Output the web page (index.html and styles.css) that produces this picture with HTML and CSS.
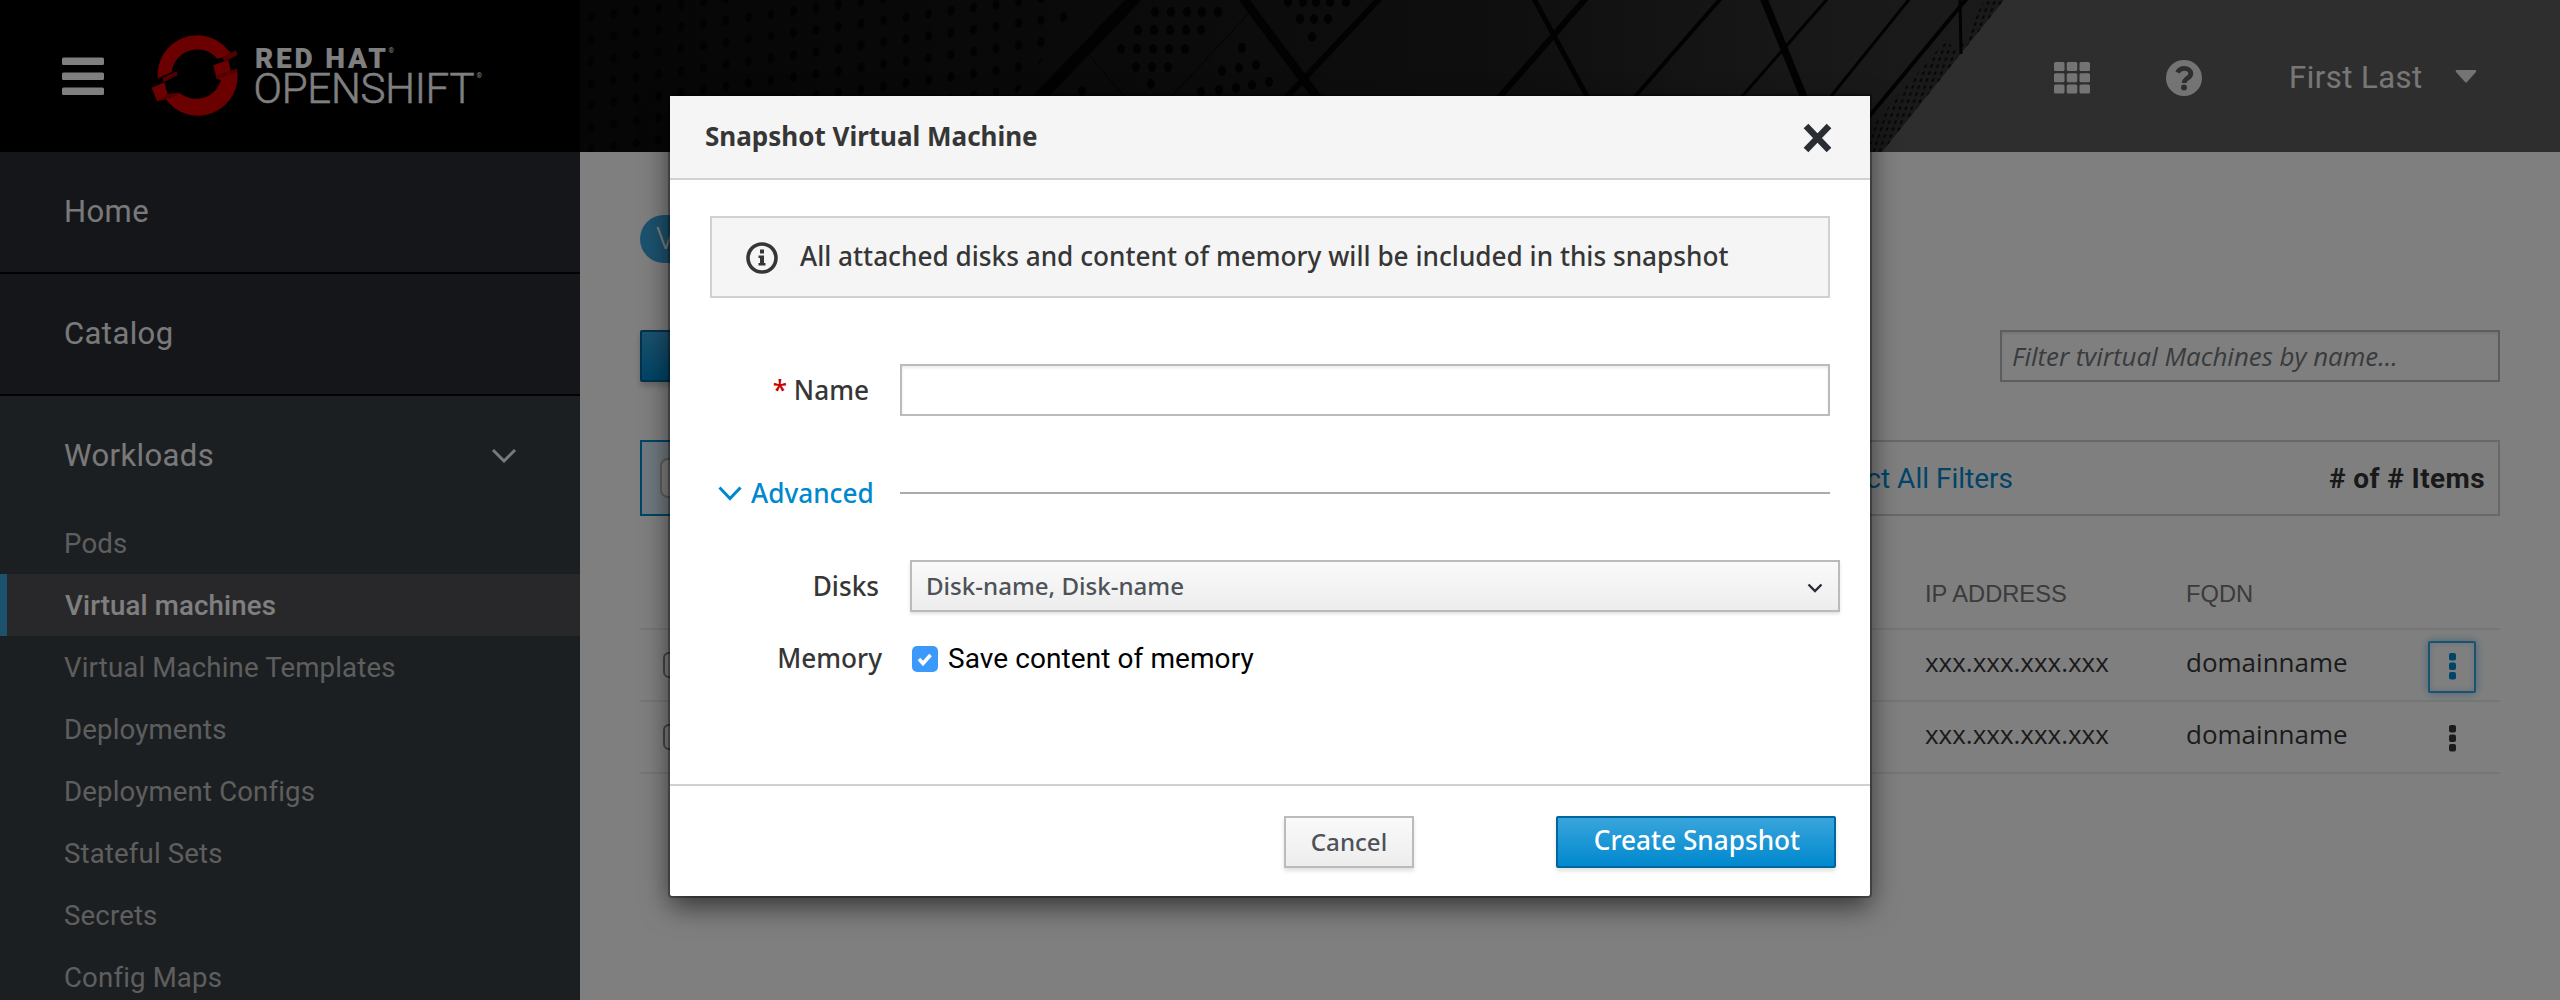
FILE: index.html
```html
<!DOCTYPE html>
<html lang="en">
<head>
<meta charset="utf-8">
<title>Virtual Machines</title>
<link rel="stylesheet" href="styles.css">
</head>
<body>
<div class="page">
  <header class="masthead">
    <div class="brand">
      <svg class="menu-icon" viewBox="0 0 42 38"><rect y="0.5" width="42" height="7.5" rx="1.5"/><rect y="15.5" width="42" height="7.5" rx="1.5"/><rect y="30.5" width="42" height="7.5" rx="1.5"/></svg>
      <svg class="logo" viewBox="0 0 345 100">
        <g class="logo-ring" transform="scale(.3333)">
          <path d="M38 160A119 119 0 0 1 248 74L258 84L232 98L217 101A78 78 0 0 0 80 141Z"/>
          <path d="M205 121L250 105L257 138L276 131A119 119 0 0 1 62 222L36 228L20 188L58 172L68 207L105 205A78 78 0 0 0 228 165L215 162Z"/>
          <path class="logo-fold" d="M52 158L96 139L97 151L56 172Z"/>
          <path class="logo-fold" d="M232 98L272 76L278 89L240 110Z"/>
          <path class="logo-fold" d="M216 150L276 131L275 141L216 163Z"/>
          <path class="logo-fold" d="M36 228L68 207L105 205L85 216L62 224Z"/>
        </g>
        <text class="logo-bold" x="110" y="42.6" textLength="131">RED HAT</text>
        <text class="logo-light" x="108.5" y="78" textLength="221">OPENSHIFT</text>
        <text class="logo-mark" x="243.5" y="27.5">®</text>
        <text class="logo-mark" x="331.5" y="53">®</text>
      </svg>
    </div>
    <svg class="facade" viewBox="580 0 1980 152" preserveAspectRatio="none">
      <defs>
        <linearGradient id="wall"><stop offset="0" stop-color="#0c0c0c"/><stop offset=".35" stop-color="#141414"/><stop offset=".65" stop-color="#1e1e1e"/><stop offset=".9" stop-color="#333"/><stop offset="1" stop-color="#343434"/></linearGradient>
        <pattern id="holes" width="22.5" height="22" patternUnits="userSpaceOnUse" patternTransform="translate(580 30) skewY(-8)"><ellipse cx="11" cy="11" rx="3.6" ry="5" fill="#050505"/></pattern>
        <pattern id="mesh" width="6" height="7" patternUnits="userSpaceOnUse" patternTransform="skewX(-18)"><ellipse cx="3" cy="3" rx="1.3" ry="2" fill="#0c0c0c"/></pattern>
      </defs>
      <rect x="580" width="1980" height="152" fill="#5d5d5d"/>
      <path d="M580 0H2004L1882 152H580Z" fill="url(#wall)"/>
      <path d="M580 0H1088L1000 115V152H580Z" fill="url(#holes)"/>
      <path d="M1984 0H2004L1882 152H1850L1946 40L1961 55V48Z" fill="url(#mesh)"/>
      <g fill="#050505">
        <ellipse cx="1155" cy="12" rx="4" ry="5"/><ellipse cx="1171" cy="12" rx="4" ry="5"/><ellipse cx="1187" cy="12" rx="4" ry="5"/><ellipse cx="1202" cy="12" rx="4" ry="5"/><ellipse cx="1218" cy="12" rx="4" ry="5"/>
        <ellipse cx="1138" cy="30" rx="4" ry="5"/><ellipse cx="1154" cy="30" rx="4" ry="5"/><ellipse cx="1170" cy="30" rx="4" ry="5"/><ellipse cx="1186" cy="30" rx="4" ry="5"/><ellipse cx="1201" cy="30" rx="4" ry="5"/>
        <ellipse cx="1121" cy="49" rx="4" ry="5"/><ellipse cx="1137" cy="49" rx="4" ry="5"/><ellipse cx="1153" cy="49" rx="4" ry="5"/><ellipse cx="1169" cy="49" rx="4" ry="5"/><ellipse cx="1185" cy="49" rx="4" ry="5"/>
        <ellipse cx="1136" cy="67" rx="4" ry="5"/><ellipse cx="1152" cy="67" rx="4" ry="5"/><ellipse cx="1168" cy="67" rx="4" ry="5"/><ellipse cx="1151" cy="84" rx="4" ry="5"/><ellipse cx="1082" cy="91" rx="4" ry="5"/>
        <ellipse cx="1242" cy="48" rx="4" ry="5"/><ellipse cx="1222" cy="71" rx="4" ry="5"/><ellipse cx="1239" cy="68" rx="4" ry="5"/><ellipse cx="1256" cy="65" rx="4" ry="5"/>
        <ellipse cx="1201" cy="92" rx="4" ry="5"/><ellipse cx="1219" cy="90" rx="4" ry="5"/><ellipse cx="1236" cy="88" rx="4" ry="5"/><ellipse cx="1252" cy="85" rx="4" ry="5"/><ellipse cx="1269" cy="82" rx="4" ry="5"/>
        <ellipse cx="1288" cy="2" rx="4" ry="5"/><ellipse cx="1303" cy="2" rx="4" ry="5"/><ellipse cx="1316" cy="2" rx="4" ry="5"/><ellipse cx="1330" cy="2" rx="4" ry="5"/><ellipse cx="1346" cy="2" rx="4" ry="5"/>
        <ellipse cx="1300" cy="19" rx="4" ry="5"/><ellipse cx="1314" cy="19" rx="4" ry="5"/><ellipse cx="1328" cy="19" rx="4" ry="5"/><ellipse cx="1312" cy="37" rx="4" ry="5"/>
      </g>
      <g class="beams">
        <path stroke-width="12" d="M1136 -3L1037 100"/>
        <path stroke-width="9" d="M1242 -3L1319 100"/>
        <path stroke-width="6" d="M1381 -3L1284 100"/>
        <path stroke-width="5" d="M1533 -3L1589 100"/>
        <path stroke-width="6" d="M1587 -3L1497 100"/>
        <path stroke-width="7.5" d="M1763 -3L1805 100"/>
        <path stroke-width="4" d="M1722 -3L1632 100"/>
        <path stroke-width="3" d="M1829 -3L1739 100"/>
        <path stroke-width="3" d="M1911 -3L1828 100"/>
        <path stroke-width="4" d="M1968 -3L1862 125"/>
        <path stroke-width="3" d="M1960 0L1961 54"/>
        <path stroke-width="1" d="M1249 13L1172 96"/>
        <path stroke-width="1" d="M1088 54L1124 96"/>
      </g>
    </svg>
    <div class="tools">
      <svg class="grid-icon" viewBox="0 0 36 32"><rect width="10.5" height="9" rx="1.5"/><rect x="12.75" width="10.5" height="9" rx="1.5"/><rect x="25.5" width="10.5" height="9" rx="1.5"/><rect y="11.3" width="10.5" height="9" rx="1.5"/><rect x="12.75" y="11.3" width="10.5" height="9" rx="1.5"/><rect x="25.5" y="11.3" width="10.5" height="9" rx="1.5"/><rect y="22.6" width="10.5" height="9" rx="1.5"/><rect x="12.75" y="22.6" width="10.5" height="9" rx="1.5"/><rect x="25.5" y="22.6" width="10.5" height="9" rx="1.5"/></svg>
      <svg class="help-icon" viewBox="0 0 36 36"><circle cx="18" cy="18" r="18"/><path d="M11.5 12.5C13 9.500 15 8.300 18 8.300C22 8.300 24.800 10.600 24.800 13.700C24.800 18.300 18.200 18 18.200 23"/><circle class="help-dot" cx="18" cy="27.5" r="3"/></svg>
      <span class="user">First Last</span>
      <svg class="caret" viewBox="0 0 22 13"><path d="M1.5 0H20.5Q22 .6 21 2L12 12Q11 13 10 12L1 2Q0 .6 1.5 0Z"/></svg>
    </div>
  </header>
  <div class="body">
    <nav class="sidebar">
      <div class="nav-item">Home</div>
      <div class="nav-item">Catalog</div>
      <div class="nav-head"><span>Workloads</span><svg class="nav-chevron" viewBox="0 0 26 15"><path d="M2 2L13 13L24 2"/></svg></div>
      <div class="nav-sub">Pods</div>
      <div class="nav-sub nav-active">Virtual machines</div>
      <div class="nav-sub">Virtual Machine Templates</div>
      <div class="nav-sub">Deployments</div>
      <div class="nav-sub">Deployment Configs</div>
      <div class="nav-sub">Stateful Sets</div>
      <div class="nav-sub">Secrets</div>
      <div class="nav-sub">Config Maps</div>
    </nav>
    <main class="content">
      <div class="title-row"><span class="kind">V</span></div>
      <div class="toolbar"><div class="create"></div><div class="filter">Filter tvirtual Machines by name...</div></div>
      <div class="facets">
        <div class="facet-on"><span class="facet-count"></span></div>
        <div class="facet-links"><span class="link">ct All Filters</span></div>
        <strong class="count"># of # Items</strong>
      </div>
      <div class="row row-head"><span></span><span>IP ADDRESS</span><span>FQDN</span><span></span></div>
      <div class="row"><span class="tick"></span><span>xxx.xxx.xxx.xxx</span><span>domainname</span><span class="kebab kebab-on"><svg viewBox="0 0 7 27"><rect width="7" height="7.5" rx="2"/><rect y="9.5" width="7" height="7.5" rx="2"/><rect y="19" width="7" height="7.5" rx="2"/></svg></span></div>
      <div class="row"><span class="tick"></span><span>xxx.xxx.xxx.xxx</span><span>domainname</span><span class="kebab"><svg viewBox="0 0 7 27"><rect width="7" height="7.5" rx="2"/><rect y="9.5" width="7" height="7.5" rx="2"/><rect y="19" width="7" height="7.5" rx="2"/></svg></span></div>
    </main>
  </div>
</div>
<div class="backdrop">
  <section class="modal">
    <div class="modal-head"><h1 class="modal-title">Snapshot Virtual Machine</h1><svg class="close" viewBox="0 0 30 30"><path d="M3 3L26 27M26 3L3 27"/></svg></div>
    <div class="modal-body">
      <div class="alert">
        <svg class="info" viewBox="0 0 32 32"><circle cx="16" cy="16" r="14"/><path d="M14 7.500H18V11.500H14ZM12.500 13.500H18V21H19.500V23.500H12.500V21H14V16H12.500Z"/></svg>
        <span>All attached disks and content of memory will be included in this snapshot</span>
      </div>
      <div class="field name-field"><label><span class="required">*</span> Name</label><div class="input"></div></div>
      <div class="field advanced"><div class="toggle"><svg class="toggle-chevron" viewBox="0 0 24 15"><path d="M1.500 1.500L12 12.500L22.500 1.500"/></svg><span>Advanced</span></div><div class="rule"></div></div>
      <div class="field disks-field"><label>Disks</label><div class="select"><span>Disk-name, Disk-name</span><svg class="select-chevron" viewBox="0 0 16 10"><path d="M1.500 1.500L8 8L14.500 1.500"/></svg></div></div>
      <div class="field memory-field"><label>Memory</label><div class="check"><svg class="checkbox" viewBox="0 0 26 26"><rect width="26" height="26" rx="5"/><path d="M7 13L11 17.500L18.500 9"/></svg><span>Save content of memory</span></div></div>
    </div>
    <div class="modal-foot"><div class="btn cancel">Cancel</div><div class="btn primary">Create Snapshot</div></div>
  </section>
</div>
</body>
</html>
```
FILE: styles.css
```css
* { box-sizing: border-box; }
body { margin: 0; width: 2560px; height: 1000px; overflow: hidden; background: #fff; font: 400 26px "Open Sans", "Noto Sans", sans-serif; position: relative; }
svg { display: block; flex: none; }
.page { height: 1000px; display: flex; flex-direction: column; overflow: hidden; }

.masthead { height: 152px; flex: none; display: flex; position: relative; background: #000; }
.brand { width: 580px; display: flex; padding: 25px 0 0 62px; }
.menu-icon { width: 42px; height: 38px; margin-top: 32px; fill: #fff; }
.logo { width: 345px; height: 100px; margin-left: 41px; font-family: Roboto, sans-serif; fill: #fff; overflow: visible; }
.logo-ring { fill: #d40000; }
.logo-fold { fill: #a80000; }
.logo-bold { font-weight: 900; font-size: 28px; }
.logo-light { font-weight: 300; font-size: 42px; stroke: #fff; stroke-width: .5px; }
.logo-mark { font-size: 7px; }
.facade { width: 1980px; height: 152px; }
.beams { stroke: #050505; fill: none; }
.tools { position: absolute; right: 83px; top: 0; height: 152px; display: flex; align-items: center; fill: #e8e8e8; }
.grid-icon { width: 36px; height: 32px; margin: 4px 76px 0 0; }
.help-icon { width: 36px; height: 36px; margin: 4px 87px 0 0; }
.help-icon path { fill: none; stroke: #5d5d5d; stroke-width: 4.8; }
.help-dot { fill: #5d5d5d; }
.user { width: 134px; font: 31px Roboto, sans-serif; letter-spacing: .5px; color: #eee; white-space: nowrap; padding-top: 3px; }
.caret { width: 22px; height: 13px; margin-left: 32px; }

.body { flex: 1; display: flex; min-height: 0; }
.sidebar { width: 580px; background: #383e43; color: #fff; font-family: Roboto, sans-serif; overflow: hidden; }
.nav-item, .nav-head { font-size: 31px; letter-spacing: .4px; padding-left: 64px; display: flex; align-items: center; color: #f2f2f2; }
.nav-item { height: 122px; background: #2b2d33; border-bottom: 2px solid #050505; padding-bottom: 2px; }
.nav-head { height: 116px; padding: 2px 63px 0 64px; justify-content: space-between; }
.nav-chevron { width: 26px; height: 15px; fill: none; stroke: #f2f2f2; stroke-width: 3; }
.nav-sub { height: 62px; padding-left: 64px; font-size: 27.6px; letter-spacing: .15px; line-height: 63px; color: #bcbcbc; }
.nav-active { padding-left: 58px; border-left: 7px solid #39a5dc; background: #505157; color: #fff; font-weight: 500; }

.content { flex: 1; padding: 63px 60px 0; display: flex; flex-direction: column; }
.title-row { height: 115px; }
.kind { display: block; width: 80px; height: 48px; padding-left: 16px; border-radius: 24px; background: #39a5dc; color: #fff; font: 300 31px/47px Roboto, sans-serif; }
.toolbar { height: 110px; display: flex; justify-content: space-between; align-items: flex-start; }
.create { width: 200px; height: 52px; border: 2px solid #00659c; border-radius: 2px; background: linear-gradient(#39a5dc, #0088ce); box-shadow: 0 4px 6px rgba(3, 3, 3, .2); }
.filter { width: 500px; height: 52px; border: 2px solid #bbb; padding-left: 10px; line-height: 48px; font-style: italic; font-size: 25.9px; color: #72767b; box-shadow: inset 0 2px 2px rgba(3, 3, 3, .08); white-space: nowrap; }
.facets { height: 76px; border: 2px solid #d1d1d1; display: flex; align-items: center; padding-right: 13px; font: 28px Roboto, sans-serif; }
.facet-on { width: 200px; height: 76px; margin: -2px 0 -2px -2px; border: 2px solid #0088ce; background: #def3ff; padding: 16px 18px; }
.facet-count { display: block; width: 46px; height: 40px; border: 2px solid #bbb; border-radius: 8px; background: #fff; }
.facet-links { flex: 1; }
.link { display: block; width: 1173px; text-align: right; color: #0088ce; }
.count { color: #333; font-weight: 700; font-size: 28px; letter-spacing: .4px; }
.row { height: 72px; display: grid; grid-template-columns: 1285px 261px 242px 48px; border-bottom: 2px solid #ececec; color: #363636; line-height: 64px; }
.row-head { height: 114px; font: 23.7px/40px "Liberation Sans", sans-serif; color: #72767b; padding-top: 58px; }
.tick { width: 26px; height: 26px; margin: 22px 0 0 23px; border: 2px solid #8a8a8a; border-radius: 6px; }
.kebab { width: 48px; height: 52px; margin-top: 11px; padding: 0 0 2px 1px; border: 2px solid transparent; border-radius: 2px; display: flex; justify-content: center; align-items: center; fill: #363636; }
.kebab svg { width: 7px; height: 27px; }
.kebab-on { border-color: #39a5dc; fill: #0088ce; box-shadow: 0 0 10px rgba(57, 165, 220, .6), inset 0 0 6px rgba(57, 165, 220, .3); }

.backdrop { position: absolute; inset: 0; background: rgba(0, 0, 0, .5); padding: 96px 0 0 670px; }
.modal { width: 1200px; height: 800px; background: #fff; border-radius: 0 0 2px 2px; box-shadow: 0 0 0 2px rgba(0, 0, 0, .3), 0 10px 28px rgba(0, 0, 0, .6); display: flex; flex-direction: column; font: 500 26.2px "Noto Sans", "Open Sans", sans-serif; color: #363636; }
.modal-head { height: 84px; background: #f5f5f5; border-bottom: 2px solid #d1d1d1; display: flex; justify-content: space-between; padding: 0 37px 0 35px; }
.modal-title { margin: 0; font-size: 26px; font-weight: 700; line-height: 80px; }
.close { width: 30px; height: 30px; margin-top: 27px; stroke: #292e34; stroke-width: 6.5; }
.modal-body { height: 604px; padding: 36px 40px 0; }
.alert { width: 1120px; height: 82px; background: #f5f5f5; border: 2px solid #d1d1d1; display: flex; align-items: center; gap: 22px; padding: 0 0 2px 34px; white-space: nowrap; }
.info { width: 32px; height: 32px; margin-top: 3px; fill: none; stroke: #363636; stroke-width: 3.6; }
.info path { fill: #363636; stroke: none; }
.field { display: flex; align-items: center; height: 52px; }
.field label { text-align: right; flex: none; }
.required { color: #c00; }
.name-field { margin-top: 66px; }
.name-field label { width: 159px; margin-right: 31px; }
.input { width: 930px; height: 52px; border: 2px solid #bbb; box-shadow: inset 0 2px 3px rgba(3, 3, 3, .08); }
.advanced { margin-top: 51px; }
.toggle { width: 182px; margin-left: 8px; display: flex; align-items: center; gap: 9px; color: #0088ce; }
.toggle span { padding-bottom: 1px; }
.toggle-chevron { width: 24px; height: 15px; fill: none; stroke: #0088ce; stroke-width: 3; }
.rule { width: 930px; height: 2px; background: #aaa; }
.disks-field { margin-top: 41px; }
.disks-field label { width: 169px; margin-right: 31px; }
.select { flex: none; width: 930px; height: 52px; border: 2px solid #bbb; background: linear-gradient(#fafafa, #ededed); box-shadow: 0 2px 3px rgba(3, 3, 3, .12); display: flex; align-items: center; justify-content: space-between; padding: 0 15px 2px 14px; font-size: 24.1px; color: #4d5258; }
.select-chevron { width: 16px; height: 10px; margin-top: 5px; fill: none; stroke: #292e34; stroke-width: 2.4; }
.memory-field { margin-top: 20px; }
.memory-field label { width: 172px; margin-right: 30px; }
.check { display: flex; align-items: center; gap: 10px; font: 400 28px Roboto, sans-serif; letter-spacing: .08px; color: #000; }
.checkbox { width: 26px; height: 26px; margin-top: 2px; fill: #3b99fc; }
.checkbox path { fill: none; stroke: #fff; stroke-width: 3.5; }
.modal-foot { flex: 1; border-top: 2px solid #d1d1d1; display: flex; justify-content: flex-end; align-items: flex-start; gap: 142px; padding: 30px 34px 0; }
.btn { height: 52px; text-align: center; border: 2px solid #bbb; box-shadow: 0 3px 4px rgba(3, 3, 3, .12); }
.cancel { width: 130px; font-size: 24.1px; line-height: 47px; background: linear-gradient(#fafafa, #ededed); color: #4d5258; }
.primary { width: 280px; padding-left: 2px; line-height: 44px; border-color: #00659c; border-radius: 2px; background: linear-gradient(#39a5dc, #0088ce); color: #fff; }
```
